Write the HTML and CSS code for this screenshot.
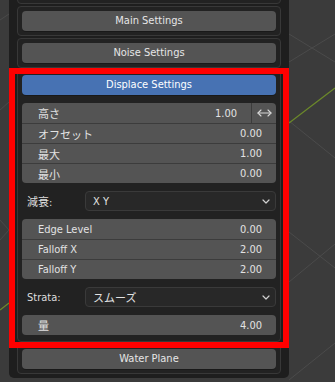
FILE: index.html
```html
<!DOCTYPE html>
<html>
<head>
<meta charset="utf-8">
<link rel="stylesheet" href="styles.css">
</head>
<body>
<svg class="grid" width="335" height="382" viewBox="0 0 335 382">
  <g stroke="#4b4b4b" stroke-width="1" fill="none">
    <line x1="289" y1="34" x2="335" y2="62"/>
    <line x1="289" y1="62" x2="335" y2="34"/>
    <line x1="289" y1="121" x2="335" y2="158"/>
    <line x1="289" y1="232" x2="335" y2="268"/>
    <line x1="289" y1="282" x2="335" y2="244"/>
    <line x1="289" y1="380" x2="335" y2="343"/>
    <line x1="0" y1="20" x2="9" y2="14"/>
    <line x1="0" y1="110" x2="9" y2="102"/>
    <line x1="0" y1="220" x2="9" y2="230"/>
    <line x1="0" y1="240" x2="9" y2="230"/>
  </g>
  <g stroke="#6c8a2a" stroke-width="1.2">
    <line x1="289" y1="123" x2="335" y2="88"/>
    <line x1="0" y1="310" x2="9" y2="303"/>
  </g>
</svg>

<div class="panel">
  <div class="box prev"></div>
  <div class="box"><div class="btn">Main Settings</div></div>
  <div class="box"><div class="btn">Noise Settings</div></div>
  <div class="box main">
    <div class="btn blue">Displace Settings</div>

    <div class="group">
      <div class="row">
        <div class="field"><span>高さ</span><span class="val">1.00</span></div>
        <div class="swap">
          <svg width="15" height="8" viewBox="0 0 15 8"><g stroke="#d8d8d8" stroke-width="1.1" fill="none" stroke-linecap="round" stroke-linejoin="round"><path d="M1 4H14"/><path d="M4 1L1 4L4 7"/><path d="M11 1L14 4L11 7"/></g></svg>
        </div>
      </div>
      <div class="row"><div class="field"><span>オフセット</span><span class="val">0.00</span></div></div>
      <div class="row"><div class="field"><span>最大</span><span class="val">1.00</span></div></div>
      <div class="row"><div class="field"><span>最小</span><span class="val">0.00</span></div></div>
    </div>

    <div class="prop">
      <span class="lbl">減衰:</span>
      <div class="dropdown"><span>X Y</span><svg class="chev" width="8" height="5" viewBox="0 0 8 5"><path d="M1 1L4 4L7 1" stroke="#d0d0d0" stroke-width="1.2" fill="none" stroke-linecap="round" stroke-linejoin="round"/></svg></div>
    </div>

    <div class="group">
      <div class="row"><div class="field"><span>Edge Level</span><span class="val">0.00</span></div></div>
      <div class="row"><div class="field"><span>Falloff X</span><span class="val">2.00</span></div></div>
      <div class="row"><div class="field"><span>Falloff Y</span><span class="val">2.00</span></div></div>
    </div>

    <div class="prop">
      <span class="lbl">Strata:</span>
      <div class="dropdown"><span>スムーズ</span><svg class="chev" width="8" height="5" viewBox="0 0 8 5"><path d="M1 1L4 4L7 1" stroke="#d0d0d0" stroke-width="1.2" fill="none" stroke-linecap="round" stroke-linejoin="round"/></svg></div>
    </div>

    <div class="group">
      <div class="row"><div class="field"><span>量</span><span class="val">4.00</span></div></div>
    </div>
  </div>
  <div class="box"><div class="btn">Water Plane</div></div>
</div>

<div class="highlight"></div>
</body>
</html>
```

FILE: styles.css
```css
html, body {
  margin: 0;
  padding: 0;
}
body {
  width: 335px;
  height: 382px;
  overflow: hidden;
  background: #3b3b3b;
  position: relative;
  font-family: "DejaVu Sans Condensed", "DejaVu Sans", "Noto Sans CJK JP", sans-serif;
  font-stretch: condensed;
  font-size: 11px;
  color: #e2e2e2;
}
.grid {
  position: absolute;
  left: 0;
  top: 0;
}
.panel {
  position: relative;
  margin-left: 9px;
  width: 280px;
  box-sizing: border-box;
  padding: 0 8px 4px;
  background: #1e1e1e;
  border-radius: 0 0 5px 5px;
  display: flex;
  flex-direction: column;
  gap: 2px;
}
.box {
  border: 1px solid #383838;
  border-radius: 4px;
  background: #222222;
  padding: 4px;
  display: flex;
  flex-direction: column;
  gap: 8px;
}
.box.prev {
  height: 30px;
  box-sizing: border-box;
  margin-top: -26px;
}
.box.main {
  padding-bottom: 6px;
}
.btn {
  height: 20px;
  line-height: 20px;
  background: #545454;
  border-radius: 4px;
  text-align: center;
  color: #e6e6e6;
  box-shadow: 0 1px 0 rgba(0,0,0,0.25);
}
.btn.blue {
  background: #4772b3;
  color: #ffffff;
}
.group {
  display: flex;
  flex-direction: column;
  border-radius: 4px;
  overflow: hidden;
  background: #545454;
}
.row {
  display: flex;
  height: 20px;
}
.row + .row {
  border-top: 1px solid #3c3c3c;
  height: 19px;
}
.field {
  flex: 1;
  display: flex;
  justify-content: space-between;
  align-items: center;
  padding: 0 14px 0 16px;
}
.swap {
  width: 24px;
  border-left: 1px solid #3c3c3c;
  display: flex;
  align-items: center;
  justify-content: center;
}
.prop {
  display: flex;
  align-items: center;
  height: 20px;
}
.lbl {
  width: 63px;
  padding-left: 5px;
  box-sizing: border-box;
  color: #dedede;
}
.dropdown {
  flex: 1;
  height: 20px;
  box-sizing: border-box;
  background: #282828;
  border: 1px solid #3a3a3a;
  border-radius: 4px;
  display: flex;
  align-items: center;
  justify-content: space-between;
  padding: 0 5px 0 7px;
}
.chev {
  display: block;
}
.highlight {
  position: absolute;
  left: 9px;
  top: 68px;
  width: 280px;
  height: 280px;
  box-sizing: border-box;
  border: 6px solid #ff0000;
}
```
